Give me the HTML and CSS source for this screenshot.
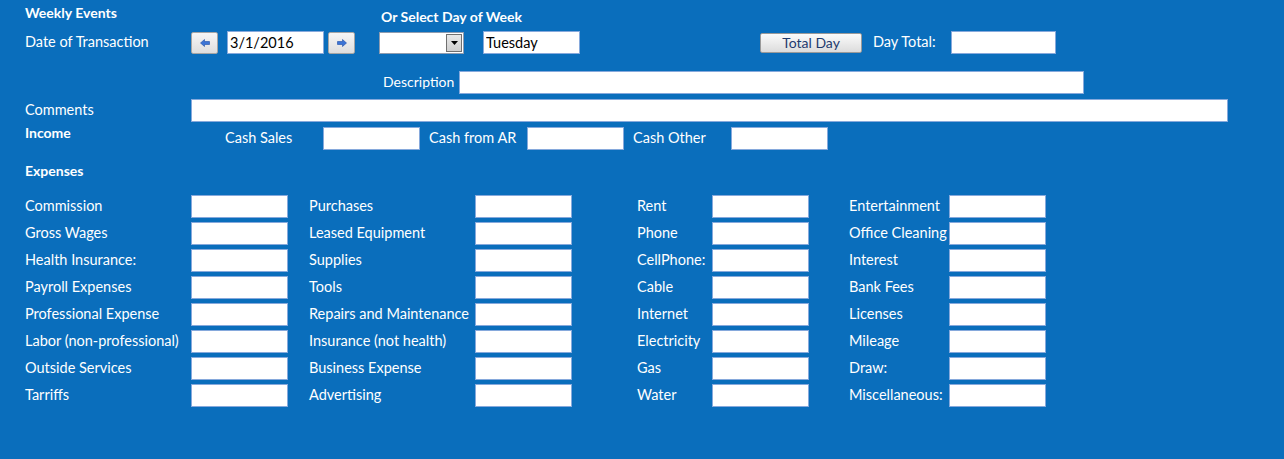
FILE: index.html
```html
<!DOCTYPE html>
<html lang="en">
  <head>
    <meta charset="UTF-8" />
    <title>Weekly Events</title>
    <link rel="stylesheet" href="styles.css">
  </head>
  <body>
    <div class="form">
      <div class="heads">
        <div class="head weekly">Weekly Events</div>
        <div class="head select-day">Or Select Day of Week</div>
      </div>

      <div class="row date-row">
        <span class="label date-label">Date of Transaction</span>
        <button class="nav-btn prev" title="Previous day">
          <svg width="10" height="8" viewBox="0 0 10 8">
            <path d="M0.5 4 L4.5 0.5 L4.5 2.5 L9.5 2.5 L9.5 5.5 L4.5 5.5 L4.5 7.5 Z" fill="#3b74d6" stroke="#1f4fa8" stroke-width="0.6"/>
          </svg>
        </button>
        <input class="box date-box" type="text" value="3/1/2016">
        <button class="nav-btn next" title="Next day">
          <svg width="10" height="8" viewBox="0 0 10 8">
            <path d="M9.5 4 L5.5 0.5 L5.5 2.5 L0.5 2.5 L0.5 5.5 L5.5 5.5 L5.5 7.5 Z" fill="#3b74d6" stroke="#1f4fa8" stroke-width="0.6"/>
          </svg>
        </button>
        <div class="combo">
          <span class="combo-text"></span>
          <span class="combo-btn">
            <svg width="7" height="4" viewBox="0 0 7 4"><path d="M0 0 L7 0 L3.5 4 Z" fill="#000"/></svg>
          </span>
        </div>
        <input class="box day-box" type="text" value="Tuesday">
        <button class="total-btn">Total Day</button>
        <span class="label day-total-label">Day Total:</span>
        <input class="box day-total" type="text">
      </div>

      <div class="row desc-row">
        <span class="label desc-label">Description</span>
        <input class="box desc-box" type="text">
      </div>

      <div class="row comments-row">
        <span class="label wide-label">Comments</span>
        <input class="box comments-box" type="text">
      </div>

      <div class="row income-row">
        <span class="head income-label">Income</span>
        <span class="label cash-label">Cash Sales</span>
        <input class="box" type="text">
        <span class="label cash-label gap">Cash from AR</span>
        <input class="box" type="text">
        <span class="label cash-label gap">Cash Other</span>
        <input class="box" type="text">
      </div>

      <div class="head expenses-label">Expenses</div>

      <div class="expenses">
        <div class="exp-col col-1">
          <span class="label">Commission</span><input class="box" type="text">
          <span class="label">Gross Wages</span><input class="box" type="text">
          <span class="label">Health Insurance:</span><input class="box" type="text">
          <span class="label">Payroll Expenses</span><input class="box" type="text">
          <span class="label">Professional Expense</span><input class="box" type="text">
          <span class="label">Labor (non-professional)</span><input class="box" type="text">
          <span class="label">Outside Services</span><input class="box" type="text">
          <span class="label">Tarriffs</span><input class="box" type="text">
        </div>
        <div class="exp-col col-2">
          <span class="label">Purchases</span><input class="box" type="text">
          <span class="label">Leased Equipment</span><input class="box" type="text">
          <span class="label">Supplies</span><input class="box" type="text">
          <span class="label">Tools</span><input class="box" type="text">
          <span class="label">Repairs and Maintenance</span><input class="box" type="text">
          <span class="label">Insurance (not health)</span><input class="box" type="text">
          <span class="label">Business Expense</span><input class="box" type="text">
          <span class="label">Advertising</span><input class="box" type="text">
        </div>
        <div class="exp-col col-3">
          <span class="label">Rent</span><input class="box" type="text">
          <span class="label">Phone</span><input class="box" type="text">
          <span class="label">CellPhone:</span><input class="box" type="text">
          <span class="label">Cable</span><input class="box" type="text">
          <span class="label">Internet</span><input class="box" type="text">
          <span class="label">Electricity</span><input class="box" type="text">
          <span class="label">Gas</span><input class="box" type="text">
          <span class="label">Water</span><input class="box" type="text">
        </div>
        <div class="exp-col col-4">
          <span class="label">Entertainment</span><input class="box" type="text">
          <span class="label">Office Cleaning</span><input class="box" type="text">
          <span class="label">Interest</span><input class="box" type="text">
          <span class="label">Bank Fees</span><input class="box" type="text">
          <span class="label">Licenses</span><input class="box" type="text">
          <span class="label">Mileage</span><input class="box" type="text">
          <span class="label">Draw:</span><input class="box" type="text">
          <span class="label">Miscellaneous:</span><input class="box" type="text">
        </div>
      </div>
    </div>
  </body>
</html>
```

FILE: styles.css
```css
* {
  margin: 0;
  padding: 0;
  box-sizing: border-box;
}

body {
  font-family: Lato, "Open Sans", sans-serif;
  font-size: 14.5px;
  background: #0a6ebc;
  color: #ffffff;
  height: 459px;
  overflow: hidden;
}

.form {
  padding-left: 25px;
}

.head {
  font-weight: bold;
  font-size: 14px;
}

.label {
  white-space: nowrap;
  padding-bottom: 2px;
}

.heads {
  display: flex;
  height: 31px;
}

.weekly {
  width: 356px;
  padding-top: 4px;
}

.select-day {
  padding-top: 8px;
}

.row {
  display: flex;
  align-items: center;
}

.box {
  display: block;
  width: 97px;
  height: 23px;
  background: #ffffff;
  border: 1px solid #86a9dc;
  font-family: Lato, sans-serif;
  font-size: 14.5px;
  color: #000;
  padding: 0 2px;
  outline: none;
}

/* date row */
.date-row {
  height: 23px;
}

.date-label {
  width: 166px;
}

.nav-btn {
  width: 27px;
  height: 22px;
  border: 1px solid #a5a5a5;
  border-radius: 2px;
  background: linear-gradient(#f6f6f6, #dedede);
  display: flex;
  align-items: center;
  justify-content: center;
}

.prev {
  margin-right: 9px;
}

.next {
  margin-left: 4px;
}

.combo {
  display: flex;
  width: 85px;
  height: 22px;
  margin-left: 24px;
  background: #fff;
  border: 1px solid #8e9cb0;
  padding: 1px;
}

.combo-text {
  flex: 1;
}

.combo-btn {
  width: 16px;
  border: 1px solid #707070;
  background: linear-gradient(#e8e8e8, #cfcfcf);
  display: flex;
  align-items: center;
  justify-content: center;
}

.day-box {
  margin-left: 19px;
}

.total-btn {
  width: 102px;
  height: 20px;
  margin-left: 180px;
  border: 1px solid #9a9a9a;
  border-radius: 2px;
  background: linear-gradient(#fbfbfb, #dcdcdc);
  color: #1e3a6e;
  font-family: Lato, sans-serif;
  font-size: 14px;
  line-height: 18px;
}

.day-total-label {
  width: 78px;
  margin-left: 11px;
}

.day-total {
  width: 105px;
}

/* description / comments */
.desc-row {
  margin-top: 17px;
}

.desc-label {
  margin-left: 358px;
  width: 76px;
  font-size: 14px;
}

.desc-box {
  width: 625px;
}

.comments-row {
  margin-top: 5px;
}

.wide-label {
  width: 166px;
}

.comments-box {
  width: 1037px;
}

/* income */
.income-row {
  margin-top: 5px;
}

.income-label {
  width: 200px;
  align-self: flex-start;
  margin-top: -3px;
}

.cash-label {
  width: 98px;
}

.cash-label.gap {
  margin-left: 9px;
}

/* expenses */
.expenses-label {
  margin-top: 12px;
  height: 33px;
}

.expenses {
  display: flex;
}

.exp-col {
  display: grid;
  grid-template-columns: 166px 97px;
  grid-auto-rows: 23px;
  row-gap: 4px;
  align-items: center;
}

.col-2 {
  margin-left: 21px;
}

.col-3 {
  margin-left: 65px;
  grid-template-columns: 75px 97px;
}

.col-4 {
  margin-left: 40px;
  grid-template-columns: 100px 97px;
}
```
